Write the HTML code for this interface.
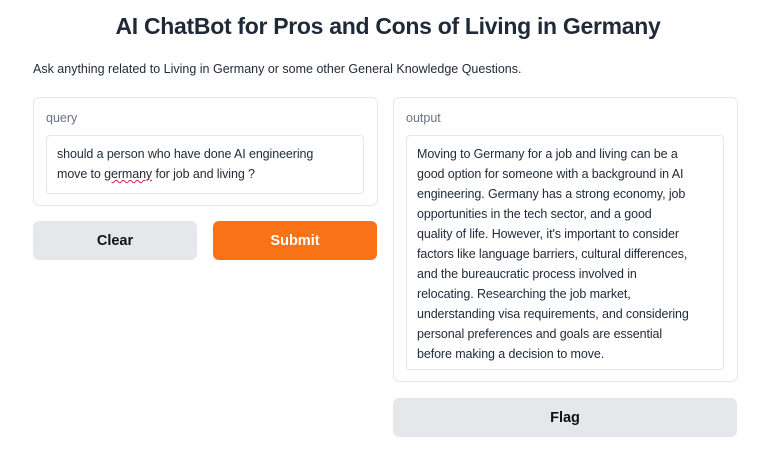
<!DOCTYPE html>
<html><head><style>
body{margin:0;width:776px;height:462px;background:#fff;font-family:"Liberation Sans",sans-serif;color:#1f2937;position:relative;overflow:hidden}
.a{position:absolute}
h1{position:absolute;left:0;width:776px;top:13px;margin:0;text-align:center;font-size:23px;font-weight:bold;color:#1f2937;letter-spacing:-0.3px}
.panel{border:1px solid #e5e7eb;border-radius:6px;background:#fff}
.lbl{font-size:12.5px;color:#6b7280}
.box{border:1px solid #e5e7eb;border-radius:4px;font-size:12.5px;line-height:20px;color:#1f2937;padding:8px 10px;box-sizing:border-box;letter-spacing:-0.1px}
.btn{border-radius:6px;font-weight:bold;font-size:14.5px;text-align:center;line-height:41px}
</style></head><body>
<h1>AI ChatBot for Pros and Cons of Living in Germany</h1>
<div class="a" style="left:33px;top:62px;font-size:12.5px;color:#1f2937">Ask anything related to Living in Germany or some other General Knowledge Questions.</div>

<div class="a panel" style="left:33px;top:97px;width:343px;height:107px"></div>
<div class="a lbl" style="left:46px;top:111px">query</div>
<div class="a box" style="left:46px;top:135px;width:318px;height:59px;padding-top:8px">should a person who have done AI engineering<br>move to <span style="text-decoration:underline wavy #e11d48;text-decoration-thickness:1px">germany</span> for job and living ?</div>
<div class="a btn" style="left:33px;top:221px;width:164px;height:39px;background:#e5e7eb;color:#111">Clear</div>
<div class="a btn" style="left:213px;top:221px;width:164px;height:39px;background:#f97316;color:#fff">Submit</div>

<div class="a panel" style="left:393px;top:97px;width:343px;height:283px"></div>
<div class="a lbl" style="left:406px;top:111px">output</div>
<div class="a box" style="left:406px;top:135px;width:318px;height:235px;padding-top:8px">Moving to Germany for a job and living can be a<br>good option for someone with a background in AI<br>engineering. Germany has a strong economy, job<br>opportunities in the tech sector, and a good<br>quality of life. However, it's important to consider<br>factors like language barriers, cultural differences,<br>and the bureaucratic process involved in<br>relocating. Researching the job market,<br>understanding visa requirements, and considering<br>personal preferences and goals are essential<br>before making a decision to move.</div>
<div class="a btn" style="left:393px;top:398px;width:344px;height:39px;background:#e5e7eb;color:#111">Flag</div>
</body></html>
